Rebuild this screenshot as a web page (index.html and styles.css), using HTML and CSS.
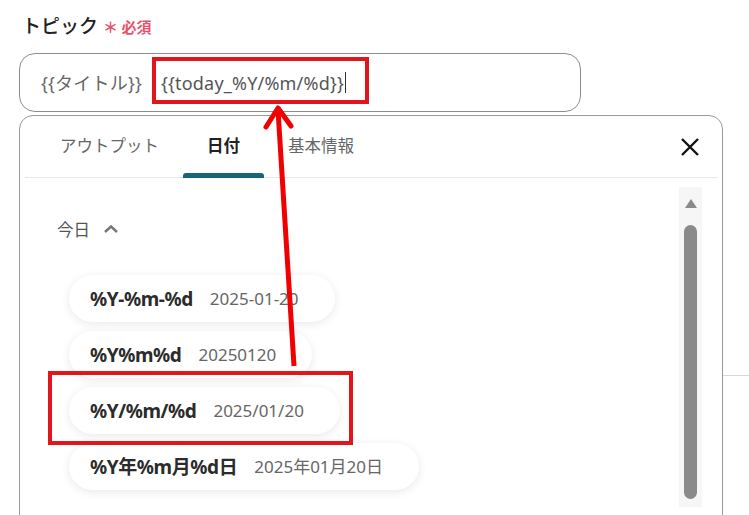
FILE: index.html
```html
<!DOCTYPE html>
<html lang="ja">
<head>
    <meta charset="UTF-8">
    <meta name="viewport" content="width=device-width, initial-scale=1.0">
    <title>トピック</title>
    <link rel="stylesheet" href="styles.css">
</head>
<body>
    <div class="page">
        <div class="field-label">
            <span class="label-text">トピック</span>
            <span class="required">＊ 必須</span>
        </div>

        <div class="topic-input">
            <span class="token">{{タイトル}}</span>
            <span class="token current">{{today_%Y/%m/%d}}<span class="caret"></span></span>
        </div>

        <div class="picker">
            <div class="picker-head">
                <div class="tabs">
                    <div class="tab">アウトプット</div>
                    <div class="tab active">日付</div>
                    <div class="tab">基本情報</div>
                </div>
                <button class="close" aria-label="閉じる">
                    <svg width="20" height="20" viewBox="0 0 20 20">
                        <path d="M2 2 L18 18 M18 2 L2 18" stroke="#111" stroke-width="2.4" fill="none"/>
                    </svg>
                </button>
            </div>

            <div class="picker-body">
                <div class="list">
                    <div class="group-title">
                        <span>今日</span>
                        <svg width="16" height="10" viewBox="0 0 16 10">
                            <path d="M2 8 L8 2.5 L14 8" stroke="#777" stroke-width="2.4" fill="none"/>
                        </svg>
                    </div>

                    <div class="chips">
                        <div class="chip"><b>%Y-%m-%d</b><span>2025-01-20</span></div>
                        <div class="chip"><b>%Y%m%d</b><span>20250120</span></div>
                        <div class="chip"><b>%Y/%m/%d</b><span>2025/01/20</span></div>
                        <div class="chip"><b>%Y年%m月%d日</b><span>2025年01月20日</span></div>
                    </div>
                </div>

                <div class="scrollbar">
                    <div class="scroll-up"></div>
                    <div class="scroll-thumb"></div>
                </div>
            </div>
        </div>

        <div class="side-line"></div>

        <!-- annotations -->
        <div class="mark mark-input"></div>
        <div class="mark mark-chip"></div>
        <svg class="arrow" width="749" height="515" viewBox="0 0 749 515">
            <path d="M294 366 L278 110" stroke="#f00000" stroke-width="5" fill="none"/>
            <path d="M266 127 L278 108 L291 126" stroke="#f00000" stroke-width="5" fill="none" stroke-linecap="round" stroke-linejoin="round"/>
        </svg>
    </div>
</body>
</html>
```

FILE: styles.css
```css
* {
    box-sizing: border-box;
}
body {
    margin: 0;
    background: #fff;
    font-family: "Noto Sans", "Noto Sans CJK JP", sans-serif;
    color: #333;
    overflow: hidden;
}
.page {
    position: relative;
    width: 749px;
    height: 515px;
    padding: 11px 0 0 19px;
}
.field-label {
    display: flex;
    align-items: baseline;
    gap: 5px;
    padding-left: 3px;
    height: 30px;
}
.label-text {
    font-family: "Noto Sans CJK JP", sans-serif;
    font-size: 19px;
    font-weight: 500;
    color: #222;
}
.required {
    font-family: "Noto Sans CJK JP", sans-serif;
    font-size: 15px;
    font-weight: 700;
    color: #e8516a;
}
.topic-input {
    margin-top: 12px;
    width: 562px;
    height: 59px;
    border: 1.5px solid #8c8c8c;
    border-radius: 16px;
    display: flex;
    align-items: center;
    gap: 19px;
    padding: 0 0 0 21px;
}
.token {
    font-size: 18px;
    line-height: 24px;
    color: #666;
    letter-spacing: 0.2px;
}
.token.current {
    color: #555;
    display: flex;
    align-items: center;
}
.caret {
    display: inline-block;
    width: 1px;
    height: 21px;
    background: #333;
    margin-left: 1px;
}
.picker {
    margin-top: 3px;
    width: 704px;
    height: 420px;
    border: 1.5px solid #999;
    border-radius: 14px;
    background: #fff;
}
.picker-head {
    display: flex;
    align-items: stretch;
    justify-content: space-between;
    height: 62px;
    margin: 0 5px;
    border-bottom: 1.5px solid #e6e6e6;
}
.tabs {
    display: flex;
    padding-left: 11px;
}
.tab {
    display: flex;
    align-items: center;
    padding: 0 24px 4px;
    font-family: "Noto Sans CJK JP", sans-serif;
    font-size: 16.5px;
    color: #666;
    position: relative;
}
.tab.active {
    color: #222;
    font-weight: 700;
}
.tab.active::after {
    content: "";
    position: absolute;
    left: 0;
    right: 0;
    bottom: -1px;
    height: 5px;
    background: #17657a;
    border-radius: 3px 3px 0 0;
}
.close {
    border: none;
    background: none;
    padding: 0;
    margin-right: 17px;
    display: flex;
    align-items: center;
    cursor: pointer;
}
.picker-body {
    display: flex;
    justify-content: space-between;
    padding: 9px 20px 0 0;
}
.list {
    padding: 28px 0 0 37px;
}
.group-title {
    display: flex;
    align-items: center;
    gap: 13px;
    font-family: "Noto Sans CJK JP", sans-serif;
    font-size: 16.5px;
    color: #555;
    height: 28px;
}
.chips {
    display: flex;
    flex-direction: column;
    align-items: flex-start;
    gap: 9px;
    margin-top: 32px;
}
.chip {
    display: flex;
    align-items: center;
    gap: 17px;
    height: 47px;
    padding: 0 36px 0 21px;
    margin-left: 12px;
    border-radius: 24px;
    background: #fff;
    box-shadow: 0 2px 10px rgba(0, 0, 0, 0.09);
}
.chip b {
    font-size: 19px;
    line-height: 24px;
    color: #2b2b2b;
    letter-spacing: -0.4px;
}
.chip span {
    font-size: 17px;
    line-height: 24px;
    color: #666;
}
.scrollbar {
    width: 23px;
    height: 320px;
    background: #f6f6f6;
    display: flex;
    flex-direction: column;
    align-items: center;
    padding-top: 12px;
}
.scroll-up {
    width: 0;
    height: 0;
    border-left: 6px solid transparent;
    border-right: 6px solid transparent;
    border-bottom: 9px solid #8a8a8a;
}
.scroll-thumb {
    margin-top: 17px;
    width: 13px;
    height: 274px;
    background: #8a8a8a;
    border-radius: 7px;
}
.side-line {
    position: absolute;
    left: 723px;
    top: 375px;
    width: 26px;
    height: 1px;
    background: #d8d8d8;
}
.mark {
    position: absolute;
    border: 4px solid #e2141c;
}
.mark-input {
    left: 152px;
    top: 57px;
    width: 217px;
    height: 47px;
}
.mark-chip {
    left: 48px;
    top: 371px;
    width: 305px;
    height: 74px;
}
.arrow {
    position: absolute;
    left: 0;
    top: 0;
    pointer-events: none;
}
```
